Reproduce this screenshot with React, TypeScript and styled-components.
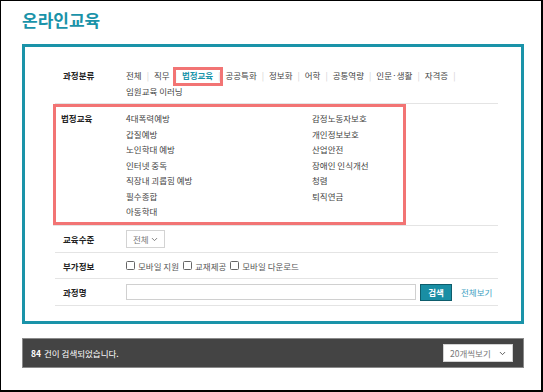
import styled, { createGlobalStyle } from "styled-components";
import { ChevronDown } from "lucide-react";

const Global = createGlobalStyle`
  body {
    margin: 0;
    font-family: "Noto Sans CJK KR", "Noto Sans", sans-serif;
    background: #fff;
  }
`

const teal = "#1a93a9";
const mark = "#f27474";

const Frame = styled.div`
  width: 543px;
  height: 392px;
  box-sizing: border-box;
  border-style: solid;
  border-color: #000;
  border-width: 1px 2px 2px 1px;
  padding: 0 17px 0 21px;
`

const Title = styled.h1`
  margin: 0;
  padding-top: 8px;
  font-size: 17px;
  line-height: 22px;
  font-weight: 700;
  color: ${teal};
`

const Panel = styled.div`
  margin-top: 13px;
  border: 3px solid ${teal};
  padding: 16px 23px 15px 30px;
`

const Row = styled.div<{ $h?: number }>`
  display: grid;
  grid-template-columns: 71px 1fr;
  align-items: center;
  min-height: ${p => p.$h ?? 26}px;
  border-bottom: 1px solid #e4e4e4;
  font-size: 8.5px;
  color: #444;
`

const Label = styled.div`
  padding-left: 8px;
  font-weight: 700;
  color: #222;
  font-size: 8.5px;
`

const TopRow = styled(Row)`
  align-items: start;
  padding: 4px 0;
  line-height: 16px;
`

const Tabs = styled.div`
  display: flex;
  flex-wrap: wrap;
  max-width: 345px;
`

const Tab = styled.span<{ $active?: boolean }>`
  position: relative;
  white-space: nowrap;
  color: ${p => (p.$active ? teal : "#444")};
  font-weight: ${p => (p.$active ? 700 : 400)};
  ${p =>
    p.$active &&
    `&::after {
      content: "";
      position: absolute;
      left: -9px;
      right: -10px;
      top: -2px;
      bottom: -5px;
      border: 3px solid ${mark};
    }`}
`

const Sep = styled.span`
  color: #cfcfcf;
  margin: 0 5px;
`

const MarkRow = styled.div`
  border-bottom: 1px solid #e4e4e4;
  margin-left: -2px;
`

const MarkBox = styled.div`
  width: 353px;
  box-sizing: border-box;
  border: 3px solid ${mark};
  padding: 4px 0 2.5px 5px;
  display: grid;
  grid-template-columns: 65px 1fr;
  font-size: 8.5px;
  color: #444;
  line-height: 15.5px;
`

const SubGrid = styled.div`
  display: grid;
  grid-template-columns: 186px 1fr;
  grid-template-rows: repeat(7, 15.5px);
  grid-auto-flow: column;
`

const SelectBox = styled.div<{ $w: number }>`
  display: inline-flex;
  align-items: center;
  justify-content: space-between;
  box-sizing: border-box;
  width: ${p => p.$w}px;
  height: 18px;
  padding: 0 5px 0 6px;
  border: 1px solid #d3d3d3;
  background: #fff;
  color: #777;
  font-size: 8.5px;
`

const Checks = styled.div`
  display: flex;
  align-items: center;
  gap: 4px;
`

const Check = styled.label`
  display: inline-flex;
  align-items: center;
  gap: 3px;
  color: #555;
`

const Box = styled.span`
  width: 7px;
  height: 7px;
  border: 1px solid #666;
  border-radius: 1.5px;
  background: #fff;
`

const SearchLine = styled.div`
  display: flex;
  align-items: center;
`

const Input = styled.div`
  width: 290px;
  height: 16px;
  box-sizing: border-box;
  border: 1px solid #d0d0d0;
`

const Button = styled.button`
  margin-left: 4px;
  width: 32px;
  height: 17px;
  padding: 0;
  border: 1px solid #0e5d6c;
  background: #198ea4;
  color: #fff;
  font-family: inherit;
  font-size: 8.5px;
  font-weight: 700;
`

const Link = styled.span`
  margin-left: 9px;
  color: #3d9fc2;
`

const ResultBar = styled.div`
  margin-top: 14px;
  height: 30px;
  box-sizing: border-box;
  border: 1px solid #8a8a8a;
  background: #444;
  display: flex;
  align-items: center;
  justify-content: space-between;
  padding: 0 10px 0 8px;
  color: #fff;
  font-size: 8.5px;
`

const Count = styled.b`
  font-weight: 700;
  margin-right: 3px;
`

const tabs = ["전체", "직무", "법정교육", "공공특화", "정보화", "어학", "공통역량", "인문·생활", "자격증", "임원교육 이러닝"];
const legal = [
  "4대폭력예방", "갑질예방", "노인학대 예방", "인터넷 중독", "직장내 괴롭힘 예방", "필수종합", "아동학대",
  "감정노동자보호", "개인정보보호", "산업안전", "장애인 인식개선", "청렴", "퇴직연금",
];

export default function App() {
  return (
    <Frame>
      <Global />
      <Title>온라인교육</Title>
      <Panel>
        <TopRow>
          <Label>과정분류</Label>
          <Tabs>
            {tabs.map((t, i) => (
              <span key={t}>
                <Tab $active={t === "법정교육"}>{t}</Tab>
                {i < tabs.length - 1 && <Sep>|</Sep>}
              </span>
            ))}
          </Tabs>
        </TopRow>
        <MarkRow>
          <MarkBox>
            <Label style={{ paddingLeft: 0 }}>법정교육</Label>
            <SubGrid>
              {legal.map(t => <span key={t}>{t}</span>)}
            </SubGrid>
          </MarkBox>
        </MarkRow>
        <Row $h={26}>
          <Label>교육수준</Label>
          <div>
            <SelectBox $w={39}>전체 <ChevronDown size={9} strokeWidth={2.5} /></SelectBox>
          </div>
        </Row>
        <Row $h={25}>
          <Label>부가정보</Label>
          <Checks>
            <Check><Box />모바일 지원</Check>
            <Check><Box />교재제공</Check>
            <Check><Box />모바일 다운로드</Check>
          </Checks>
        </Row>
        <Row $h={26}>
          <Label>과정명</Label>
          <SearchLine>
            <Input />
            <Button>검색</Button>
            <Link>전체보기</Link>
          </SearchLine>
        </Row>
      </Panel>
      <ResultBar>
        <span><Count>84</Count>건이 검색되었습니다.</span>
        <SelectBox $w={70}>20개씩보기 <ChevronDown size={9} strokeWidth={2.5} color="#555" /></SelectBox>
      </ResultBar>
    </Frame>
  );
}
